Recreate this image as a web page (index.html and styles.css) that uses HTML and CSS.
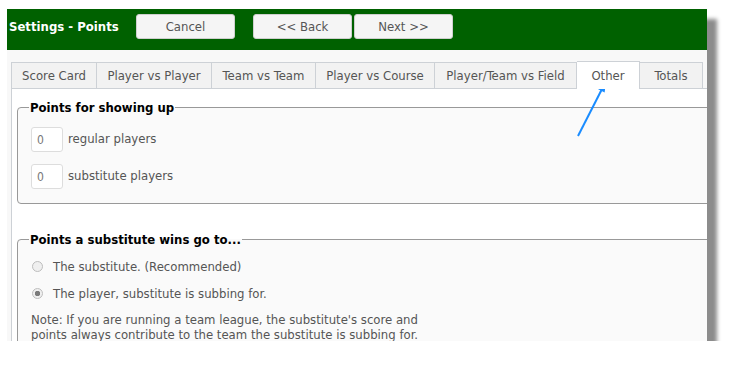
FILE: index.html
```html
<!DOCTYPE html>
<html lang="en">
<head>
    <meta charset="UTF-8">
    <meta name="viewport" content="width=device-width, initial-scale=1.0">
    <title>Settings - Points</title>
    <link rel="stylesheet" href="styles.css">
</head>
<body>
    <div class="screen">
        <div class="header">
            <div class="title">Settings - Points</div>
            <button type="button" class="btn">Cancel</button>
            <button type="button" class="btn btn-back">&lt;&lt; Back</button>
            <button type="button" class="btn btn-next">Next &gt;&gt;</button>
        </div>

        <div class="main">
            <ul class="tabs">
                <li class="tab tab-score">Score Card</li>
                <li class="tab tab-pvp">Player vs Player</li>
                <li class="tab tab-tvt">Team vs Team</li>
                <li class="tab tab-pvc">Player vs Course</li>
                <li class="tab tab-field">Player/Team vs Field</li>
                <li class="tab tab-other active">Other</li>
                <li class="tab tab-totals">Totals</li>
            </ul>

            <div class="panel">
                <fieldset class="group">
                    <legend>Points for showing up</legend>
                    <div class="row">
                        <input type="text" class="points" value="0">
                        <label>regular players</label>
                    </div>
                    <div class="row">
                        <input type="text" class="points" value="0">
                        <label>substitute players</label>
                    </div>
                </fieldset>

                <fieldset class="group group-sub">
                    <legend>Points a substitute wins go to...</legend>
                    <div class="radio-row">
                        <input type="radio" name="subpoints" id="sub1">
                        <label for="sub1">The substitute. (Recommended)</label>
                    </div>
                    <div class="radio-row">
                        <input type="radio" name="subpoints" id="sub2" checked>
                        <label for="sub2">The player, substitute is subbing for.</label>
                    </div>
                    <p class="note">Note: If you are running a team league, the substitute's score and<br>points always contribute to the team the substitute is subbing for.</p>
                </fieldset>
            </div>
        </div>

        <!-- callout arrow pointing at the Other tab -->
        <svg class="arrow" width="50" height="80" viewBox="0 0 50 80">
            <line x1="13" y1="66" x2="37" y2="19" stroke="#1a8cff" stroke-width="2"/>
            <polygon points="41,12 39.6,22.4 33.2,19.2" fill="#1a8cff"/>
        </svg>
    </div>
</body>
</html>
```

FILE: styles.css
```css
body {
    margin: 0;
    background: #ffffff;
    font-family: "DejaVu Sans Condensed", "DejaVu Sans", Verdana, sans-serif;
    font-size: 12px;
    color: #555555;
}
.screen {
    position: relative;
    width: 700px;
    height: 332px;
    margin: 9px 0 0 7px;
    overflow: hidden;
    background: #f8f8f8;
    box-shadow: 10px 10px 4px #8c8c8c;
}
.header {
    height: 41px;
    box-sizing: border-box;
    padding-top: 5px;
    background-color: #006100;
    display: flex;
    align-items: flex-start;
}
.title {
    width: 127px;
    padding-left: 2px;
    line-height: 25px;
    color: #ffffff;
    font-weight: bold;
    font-size: 13px;
}
.btn {
    width: 99px;
    height: 25px;
    margin: 0;
    padding: 0;
    background-color: #f5f5f5;
    border: 1px solid #cfcfcf;
    border-radius: 3px;
    font-family: inherit;
    font-size: 13px;
    color: #555555;
}
.btn-back {
    margin-left: 18px;
}
.btn-next {
    margin-left: 2px;
}
.main {
    padding: 12px 0 0 4px;
}
.tabs {
    display: flex;
    margin: 0;
    padding: 0;
    list-style: none;
    height: 26px;
}
.tab {
    box-sizing: border-box;
    height: 26px;
    line-height: 25px;
    text-align: center;
    background-color: #f2f2f2;
    border: 1px solid #cdd1d6;
    border-bottom: none;
    border-left: none;
    font-size: 13px;
    color: #555555;
}
.tab-score {
    width: 86px;
    border-left: 1px solid #cdd1d6;
}
.tab-pvp { width: 115px; }
.tab-tvt { width: 104px; }
.tab-pvc { width: 119px; }
.tab-field { width: 142px; }
.tab-other { width: 63px; }
.tab-totals { width: 63px; }
.tab.active {
    position: relative;
    top: -1px;
    height: 28px;
    line-height: 27px;
    background-color: #ffffff;
    z-index: 1;
}
.panel {
    background-color: #ffffff;
    border-top: 1px solid #cdd1d6;
    border-left: 1px solid #cdd1d6;
    padding: 11px 0 20px 5px;
}
.group {
    width: 720px;
    margin: 0;
    padding: 12px 0 14px 13px;
    background-color: #fafafa;
    border: 1px solid #999999;
    border-radius: 4px;
}
.group legend {
    padding: 0 1px;
    margin-left: -2px;
    font-weight: bold;
    font-size: 13px;
    color: #000000;
}
.group-sub {
    margin-top: 28px;
    padding-top: 6px;
}
.row {
    display: flex;
    align-items: flex-start;
    margin-top: 12px;
}
.row:first-of-type {
    margin-top: 0;
}
.points {
    width: 32px;
    height: 25px;
    box-sizing: border-box;
    margin: 0 5px 0 0;
    padding: 0 5px;
    border: 1px solid #dddddd;
    border-radius: 3px;
    background: #ffffff;
    font-family: inherit;
    font-size: 12px;
    color: #777777;
}
.row label {
    margin-top: 4px;
    font-size: 13px;
}
.radio-row {
    display: flex;
    align-items: center;
    height: 27px;
}
.radio-row input {
    appearance: none;
    width: 11px;
    height: 11px;
    margin: 0 10px 0 1px;
    border: 1px solid #bdbdbd;
    border-radius: 50%;
    background: #efefef;
}
.radio-row input:checked {
    background: radial-gradient(circle, #7a7a7a 0, #7a7a7a 2.5px, #efefef 3px);
}
.radio-row label {
    font-size: 13px;
}
.note {
    margin: 5px 0 0 0;
    font-size: 13px;
    line-height: 15px;
}
.arrow {
    position: absolute;
    left: 558px;
    top: 61px;
}
```
